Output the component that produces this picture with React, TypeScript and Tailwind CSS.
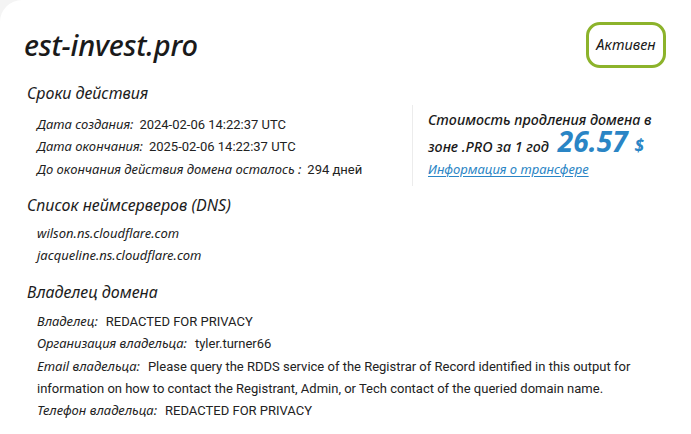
import React from "react";

const heading = "font-['Noto_Sans',sans-serif] italic";
const value = "font-['Roboto',sans-serif] not-italic";

interface Field {
  label: string;
  value: string;
}

const terms: Field[] = [
  { label: "Дата создания:", value: "2024-02-06 14:22:37 UTC" },
  { label: "Дата окончания:", value: "2025-02-06 14:22:37 UTC" },
  { label: "До окончания действия домена осталось :", value: "294 дней" },
];

const nameservers = ["wilson.ns.cloudflare.com", "jacqueline.ns.cloudflare.com"];

const owner: Field[] = [
  { label: "Владелец:", value: "REDACTED FOR PRIVACY" },
  { label: "Организация владельца:", value: "tyler.turner66" },
  {
    label: "Email владельца:",
    value:
      "Please query the RDDS service of the Registrar of Record identified in this output for information on how to contact the Registrant, Admin, or Tech contact of the queried domain name.",
  },
  { label: "Телефон владельца:", value: "REDACTED FOR PRIVACY" },
];

function SectionTitle({ children }: { children: React.ReactNode }) {
  return (
    <h2 className={`${heading} text-[16px] leading-[20px] text-[#1c1c1c]`}>{children}</h2>
  );
}

export default function App() {
  return (
    <div className="w-[691px] h-[434px] bg-[#f4f4f4]">
      <div className="w-full h-full bg-white rounded-tl-[22px] text-[#222]">
        {/* header */}
        <div className="flex items-center justify-between pt-[22px] pl-[24px] pr-[25px]">
          <h1 className={`${heading} font-medium text-[29px] leading-[46px] text-[#1a1a1a] tracking-[-0.2px]`}>
            est-invest.pro
          </h1>
          <div className="h-[46px] w-[80px] flex items-center justify-center rounded-[14px] border-[3px] border-[#8cb32b]">
            <span className={`${heading} text-[14.5px] text-[#1a1a1a]`}>Активен</span>
          </div>
        </div>

        <div className="pl-[27px] pr-[25px]">
          {/* validity + renewal price */}
          <div className="flex mt-[15px] h-[112px]">
            <div className="w-[385px]">
              <SectionTitle>Сроки действия</SectionTitle>
              <ul className="mt-[10px] pl-[10px]">
                {terms.map((f) => (
                  <li key={f.label} className="h-[22.5px] flex items-center text-[13px]">
                    <span className={`${heading} text-[13px]`}>{f.label}</span>
                    <span className={`${value} ml-[6px]`}>{f.value}</span>
                  </li>
                ))}
              </ul>
            </div>
            <div className="self-start mt-[22px] border-l border-[#ececec] pl-[15px] pt-[2px] pb-[7px]">
              <p className={`${heading} font-medium text-[14.3px] leading-[26px] text-[#1a1a1a]`}>
                Стоимость продления домена в
              </p>
              <p className={`${heading} font-medium text-[14.3px] h-[26px] leading-[26px] text-[#1a1a1a] whitespace-nowrap`}>
                зоне .PRO за 1 год
                <span className="ml-[9px] text-[28px] leading-[16px] font-bold text-[#2a85c5]">26.57</span>
                <span className="ml-[7px] text-[17px] leading-[16px] font-bold text-[#2a85c5]">$</span>
              </p>
              <a
                href="#"
                className={`${heading} block text-[13px] leading-[20px] text-[#2a85c5] underline underline-offset-2`}
              >
                Информация о трансфере
              </a>
            </div>
          </div>

          {/* nameservers */}
          <div>
            <SectionTitle>Список неймсерверов (DNS)</SectionTitle>
            <ul className="mt-[8px] pl-[10px]">
              {nameservers.map((ns) => (
                <li key={ns} className={`${heading} h-[22px] flex items-center text-[13px]`}>
                  {ns}
                </li>
              ))}
            </ul>
          </div>

          {/* owner */}
          <div className="mt-[15px]">
            <SectionTitle>Владелец домена</SectionTitle>
            <ul className="mt-[9px] pl-[10px] pr-[10px]">
              {owner.map((f) => (
                <li key={f.label} className={`${value} text-[13px] leading-[22.3px]`}>
                  <span className={`${heading} leading-none`}>{f.label}</span>
                  <span className="ml-[8px]">{f.value}</span>
                </li>
              ))}
            </ul>
          </div>
        </div>
      </div>
    </div>
  );
}
